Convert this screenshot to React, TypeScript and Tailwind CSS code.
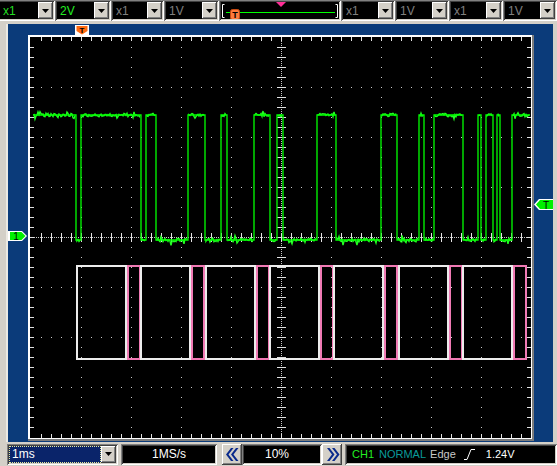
import React from "react";

const HIGH = 115;
const LOW = 240;
const EDGES = [
  76, 81, 141, 146, 156, 188, 205, 221, 227, 254, 270, 277, 283, 317, 336, 381, 397, 419, 424,
  434, 463, 478, 481, 486, 493, 497, 500, 512,
];

type Seg = { a: number; b: number; y: number };

function buildSegs(): Seg[] {
  const segs: Seg[] = [];
  let x = 33;
  let high = true;
  for (const e of EDGES) {
    segs.push({ a: x, b: e, y: high ? HIGH : LOW });
    x = e;
    high = !high;
  }
  segs.push({ a: x, b: 530, y: HIGH });
  return segs;
}

const SEGS = buildSegs();

function rand(seed: number) {
  let s = seed;
  return () => {
    s = (s * 16807) % 2147483647;
    return s / 2147483647;
  };
}

// main trace: clean edges
const TRACE = (() => {
  let d = `M33 ${HIGH}`;
  let high = true;
  for (const e of EDGES) {
    high = !high;
    d += `H${e}V${high ? HIGH : LOW}`;
  }
  return d + "H530";
})();

// noise riding on the flat levels
const NOISE = (() => {
  const r = rand(918273);
  let d = "";
  for (const s of SEGS) {
    if (s.b - s.a < 3) continue;
    d += `M${s.a + 1} ${s.y}`;
    for (let x = s.a + 1; x < s.b; x += 1) {
      let n = (r() - 0.5) * 3.6;
      if (r() < 0.08) n += (r() < 0.5 ? -1 : 1) * (1.5 + r() * 3);
      d += `L${x} ${(s.y + n).toFixed(1)}`;
    }
  }
  return d;
})();

const DOTS = (() => {
  let d = "";
  const dot = (x: number, y: number) => {
    d += `M${x} ${y}h1v1h-1z`;
  };
  for (const y of [87, 137, 187, 287, 337, 387]) for (let k = 1; k < 50; k++) dot(31 + k * 10, y);
  for (const x of [81, 131, 181, 231, 331, 381, 431, 481])
    for (let k = 1; k < 40; k++) dot(x, 37 + k * 10);
  for (let x = 30; x < 531; x += 2) dot(x, 237);
  for (let y = 37; y < 438; y += 2) dot(281, y);
  return d;
})();

const TICKS = (() => {
  let d = "";
  for (let k = 1; k < 50; k++) {
    const x = 31 + k * 10 + 0.5;
    d += `M${x} 37V41M${x} 434V438M${x} 233V242`;
  }
  for (let k = 1; k < 40; k++) {
    const y = 37 + k * 10 + 0.5;
    d += `M30 ${y}H34M527 ${y}H531M277 ${y}H286`;
  }
  return d;
})();

const PERIOD = 64.3;
const BOXES = Array.from({ length: 7 }, (_, k) => ({
  white: Math.round(77 + PERIOD * k),
  pink: Math.round(128 + PERIOD * k),
}));

function Scope() {
  return (
    <svg width={545} height={418} viewBox="8 24 545 418" className="block">
      <rect x={8} y={24} width={545} height={418} fill="#0b3b7a" />
      <rect x={28} y={35} width={506} height={406} fill="#7c7c7c" />
      <rect x={28} y={35} width={504} height={404} fill="#ffffff" />
      <rect x={30} y={37} width={501} height={401} fill="#000000" />
      <path d={DOTS} fill="#c8c8c8" />
      <path d={TICKS} stroke="#e2e2e2" strokeWidth={1} shapeRendering="crispEdges" fill="none" />

      {BOXES.map((b) => (
        <g key={b.white} fill="none" strokeWidth={2}>
          <rect x={b.white} y={266} width={49} height={93} stroke="#ececec" />
          <rect x={b.pink} y={266} width={12} height={93} stroke="#f07ab4" />
        </g>
      ))}

      <path d={NOISE} stroke="#22ff22" strokeWidth={1.4} fill="none" />
      <path d={TRACE} stroke="#00ff00" strokeWidth={1.3} fill="none" />

      {/* trigger position marker */}
      <rect x={75} y={25} width={14} height={10} fill="#ffffff" />
      <polygon points="76.5,26 87.5,26 87.5,31 82,34.5 76.5,31" fill="#ff6a10" />
      <text x={82} y={32.5} fontSize={8} fontWeight="bold" textAnchor="middle" fill="#000" fontFamily="Liberation Sans, sans-serif">
        T
      </text>

      {/* channel 1 marker */}
      <polygon points="8,231 22,231 27,236 22,241 8,241" fill="#ffffff" />
      <polygon points="10,232 21.5,232 25.5,236 21.5,240 10,240" fill="#00f000" />
      <text x={16} y={240} fontSize={10} textAnchor="middle" fill="#000" fontFamily="Liberation Sans, sans-serif">
        1
      </text>

      {/* trigger level marker */}
      <polygon points="534,204.5 539,199 553,199 553,210 539,210" fill="#ffffff" />
      <polygon points="536,204.5 540,200 553,200 553,209 540,209" fill="#00f000" />
      <text x={546} y={208.5} fontSize={10} textAnchor="middle" fill="#000" fontFamily="Liberation Sans, sans-serif">
        T
      </text>
    </svg>
  );
}

function ArrowButton() {
  return (
    <div className="w-[15px] h-full bg-[#d4d0c8] shadow-[inset_-1px_-1px_#404040,inset_1px_1px_#ffffff,inset_-2px_-2px_#808080] flex items-center justify-center">
      <svg width={7} height={4} viewBox="0 0 7 4">
        <polygon points="0,0 7,0 3.5,4" fill="#000" />
      </svg>
    </div>
  );
}

const SUNKEN =
  "shadow-[inset_1px_1px_#808080,inset_-1px_-1px_#ffffff,inset_2px_2px_#404040,inset_-2px_-2px_#d4d0c8]";

function Combo({ className, text, textClass }: { className: string; text: string; textClass: string }) {
  return (
    <div className={`${className} h-[21px] p-[2px] flex ${SUNKEN}`}>
      <div className={`flex-1 min-w-0 bg-black flex items-center pl-[3px] text-[12px] leading-none ${textClass}`}>
        {text}
      </div>
      <ArrowButton />
    </div>
  );
}

function TriggerSlider() {
  return (
    <div className={`w-[122px] h-[21px] p-[2px] ${SUNKEN}`}>
      <svg width={118} height={17} viewBox="0 0 118 17" className="block bg-black">
        <path d="M3.5 2.5H1.5V15.5H3.5M114.5 2.5H116.5V15.5H114.5" stroke="#ffffff" fill="none" />
        <line x1={5} y1={10.5} x2={114} y2={10.5} stroke="#00ff00" />
        <polygon points="55,0 65,0 60,5" fill="#ff2e97" />
        <rect x={9.5} y={7.5} width={9} height={10} rx={2} fill="#ff7a3c" stroke="#c84a10" />
        <text x={14} y={16} fontSize={9} fontWeight="bold" textAnchor="middle" fill="#000" fontFamily="Liberation Sans, sans-serif">
          T
        </text>
      </svg>
    </div>
  );
}

function Chevrons({ dir }: { dir: "left" | "right" }) {
  const pts =
    dir === "left"
      ? ["6,0 1,6.5 6,13 8.5,13 3.5,6.5 8.5,0", "11,0 6,6.5 11,13 13.5,13 8.5,6.5 13.5,0"]
      : ["2,0 7,6.5 2,13 4.5,13 9.5,6.5 4.5,0", "7,0 12,6.5 7,13 9.5,13 14.5,6.5 9.5,0"];
  return (
    <div className="w-[20px] h-[21px] bg-[#d4d0c8] shadow-[inset_-1px_-1px_#404040,inset_1px_1px_#ffffff,inset_-2px_-2px_#808080] flex items-center justify-center">
      <svg width={15} height={13} viewBox="0 0 15 13">
        {pts.map((p) => (
          <polygon key={p} points={p} fill="#0a2a8c" />
        ))}
      </svg>
    </div>
  );
}

function BottomBar() {
  return (
    <div className="h-[24px] flex items-center pl-[7px] text-[12px] leading-none">
      <div className={`w-[111px] h-[21px] p-[2px] flex ${SUNKEN}`}>
        <div className="flex-1 min-w-0 bg-[#0a246a] text-white flex items-center pl-[2px] border border-dotted border-[#e8e89a]">
          1ms
        </div>
        <ArrowButton />
      </div>
      <div className={`ml-[3px] w-[96px] h-[21px] bg-black text-white flex items-center justify-center ${SUNKEN}`}>
        1MS/s
      </div>
      <div className="ml-[5px]">
        <Chevrons dir="left" />
      </div>
      <div className={`w-[80px] h-[21px] bg-black text-white flex items-center justify-center pr-[10px] ${SUNKEN}`}>
        10%
      </div>
      <Chevrons dir="right" />
      <div className={`ml-[3px] flex-1 h-[21px] bg-black flex items-center pl-[7px] text-[11px] ${SUNKEN}`}>
        <span className="text-[#22ee22]">CH1</span>
        <span className="ml-[5px] text-[#0a9a9a]">NORMAL</span>
        <span className="ml-[4px] text-[#c8c8c8]">Edge</span>
        <svg width={11} height={11} viewBox="0 0 11 11" className="ml-[8px]">
          <path d="M0 10.5H3L7 0.5H11" stroke="#ffffff" fill="none" />
        </svg>
        <span className="ml-[11px] text-white">1.24V</span>
      </div>
    </div>
  );
}

export default function App() {
  return (
    <div className="w-[557px] h-[466px] overflow-hidden bg-[#d4d0c8] flex flex-col font-['Liberation_Sans',Arial,sans-serif]">
      <div className="h-[22px] flex">
        <Combo className="w-[57px] -ml-[2px]" text="x1" textClass="text-[#22dd22]" />
        <Combo className="w-[56px]" text="2V" textClass="text-[#22ee22]" />
        <Combo className="w-[53px]" text="x1" textClass="text-[#808080]" />
        <Combo className="w-[55px]" text="1V" textClass="text-[#808080]" />
        <TriggerSlider />
        <Combo className="w-[54px]" text="x1" textClass="text-[#808080]" />
        <Combo className="w-[54px]" text="1V" textClass="text-[#808080]" />
        <Combo className="w-[54px]" text="x1" textClass="text-[#808080]" />
        <Combo className="w-[54px]" text="1V" textClass="text-[#808080]" />
      </div>
      <div className="h-[2px]" />
      <div className="h-[418px] flex">
        <div className="w-[8px] border-r-2 border-[#ebe9e3]" />
        <Scope />
        <div className="w-[4px]" />
      </div>
      <BottomBar />
    </div>
  );
}
